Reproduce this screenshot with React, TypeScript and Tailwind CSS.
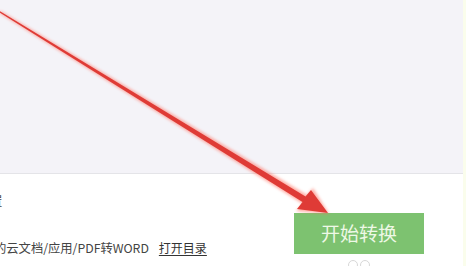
import React from "react";

export default function App() {
  return (
    <div
      className="relative w-[466px] h-[266px] overflow-hidden flex bg-white"
      style={{ fontFamily: '"Noto Sans CJK SC", "Noto Sans", sans-serif' }}
    >
      <div className="flex-1 flex flex-col min-h-0">
        <div className="h-[174px] shrink-0 bg-[#f4f3f8] border-b border-[#e4e4e8]" />
        <div className="flex-1 min-h-0 flex">
          <div className="flex flex-col pt-[19px] text-[#444] text-[12.3px] leading-[16px]">
            <div className="-ml-[10px] h-[16px]">置</div>
            <div className="mt-[31px] -ml-[6px] whitespace-nowrap">
              的云文档/应用/PDF转WORD
              <span className="ml-[10px] underline underline-offset-2 text-[#333] text-[12px]">打开目录</span>
            </div>
          </div>
          <div className="ml-auto mr-[39px] flex flex-col items-center pt-[39px]">
            <div className="w-[130px] h-[41px] shrink-0 bg-[#7dc270] flex items-center justify-center text-[19px] text-[#eef8e6]">
              开始转换
            </div>
            <div className="mt-[6px] flex gap-[2px] shrink-0">
              <div className="w-[10px] h-[10px] rounded-full border border-[#d8d8d8]" />
              <div className="w-[10px] h-[10px] rounded-full border border-[#d8d8d8]" />
            </div>
          </div>
        </div>
      </div>
      <div className="w-[3px] bg-[#fafdec]" />
      <svg
        className="absolute left-0 top-0 pointer-events-none"
        width="466"
        height="266"
        viewBox="0 0 466 266"
      >
        <defs>
          <filter id="glow" x="-10%" y="-10%" width="120%" height="120%">
            <feGaussianBlur stdDeviation="1.6" />
          </filter>
        </defs>
        <g filter="url(#glow)" opacity="0.55">
          <polygon points="0,10.5 0,13.5 303,204 296,211 329,214 313,188 307,195" fill="#ff6a5a" />
        </g>
        <polygon points="0,11.3 0,12.7 302.5,202 297,209 328,213 311,190 305.5,196.5" fill="#df3b36" />
      </svg>
    </div>
  );
}
